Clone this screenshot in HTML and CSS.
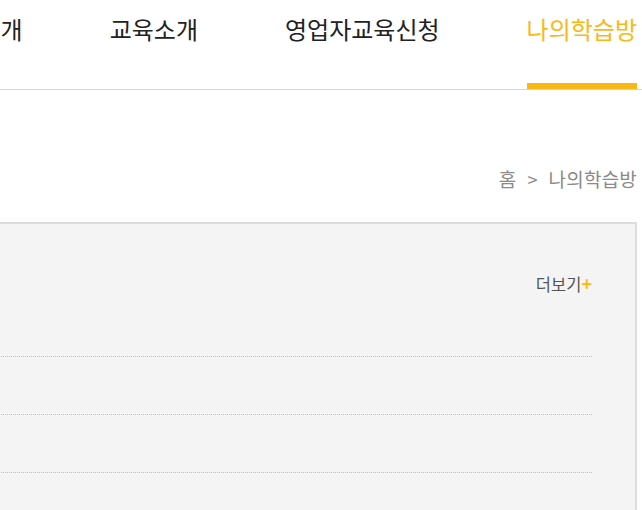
FILE: index.html
```html
<!DOCTYPE html>
<html lang="ko">
<head>
<meta charset="utf-8">
<title>나의학습방</title>
<link rel="stylesheet" href="styles.css">
</head>
<body>
<div class="page">
  <header class="gnb">
    <ul class="gnb-list">
      <li class="gnb-item">기관소개</li>
      <li class="gnb-item">교육소개</li>
      <li class="gnb-item">영업자교육신청</li>
      <li class="gnb-item is-active">나의학습방</li>
    </ul>
  </header>
  <nav class="breadcrumb">
    <span>홈</span><span class="sep">&gt;</span><span>나의학습방</span>
  </nav>
  <section class="board">
    <div class="board-head">
      <a class="more">더보기<span class="plus">+</span></a>
    </div>
    <ul class="board-list">
      <li class="board-row"></li>
      <li class="board-row"></li>
      <li class="board-row"></li>
      <li class="board-row"></li>
    </ul>
  </section>
</div>
</body>
</html>
```

FILE: styles.css
```css
html, body {
  margin: 0;
  padding: 0;
  background: #ffffff;
}
body {
  font-family: "Noto Sans CJK KR", "Noto Sans", sans-serif;
  overflow: hidden;
}
.page {
  width: 642px;
  height: 510px;
  overflow: hidden;
}
.gnb {
  height: 89px;
  border-bottom: 1px solid #d4d4d4;
  overflow: hidden;
}
.gnb-list {
  list-style: none;
  margin: 0;
  padding: 0 5px 0 0;
  display: flex;
  justify-content: flex-end;
  gap: 87px;
  height: 89px;
  white-space: nowrap;
}
.gnb-item {
  flex: none;
  box-sizing: border-box;
  height: 89px;
  padding-top: 15px;
  font-size: 24px;
  line-height: 28px;
  letter-spacing: 0;
  color: #222222;
  border-bottom: 6px solid transparent;
}
.gnb-item.is-active {
  color: #fcb812;
  border-bottom-color: #fcb812;
}
.breadcrumb {
  display: flex;
  justify-content: flex-end;
  align-items: center;
  gap: 11px;
  padding: 76px 5px 0 0;
  height: 26px;
  font-size: 19px;
  line-height: 26px;
  letter-spacing: 0.2px;
  color: #8a8a8a;
}
.breadcrumb .sep {
  font-size: 18px;
}
.board {
  margin: 30px 5px 0 -10px;
  height: 400px;
  background: #f4f4f4;
  border: 2px solid #dcdcdc;
  border-bottom: 0;
}
.board-head {
  display: flex;
  justify-content: flex-end;
  padding: 48px 43px 0 0;
  height: 22px;
}
.more {
  font-size: 16.5px;
  line-height: 22px;
  color: #555555;
}
.plus {
  color: #fcb812;
  font-weight: 700;
  font-size: 18px;
  margin-left: 0;
}
.board-list {
  list-style: none;
  margin: 5px 43px 0 0;
  padding: 0;
}
.board-row {
  height: 57px;
  border-bottom: 1px dotted #bdbdbd;
}
```
